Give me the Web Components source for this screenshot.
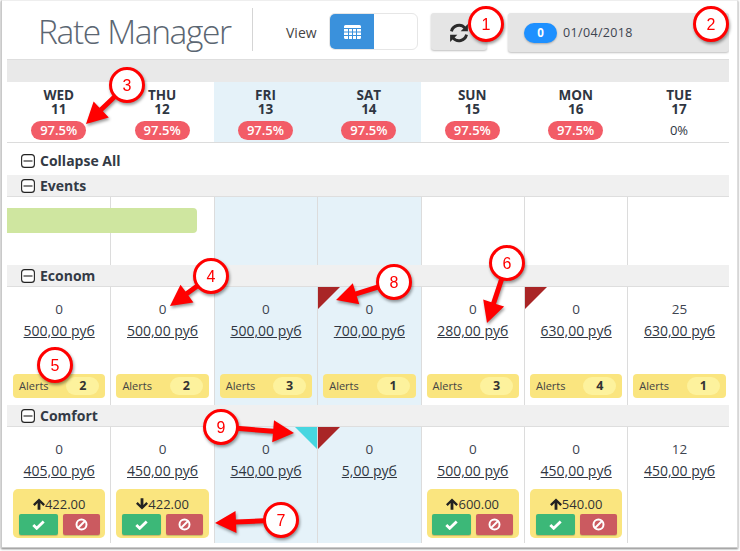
<!DOCTYPE html>
<html>
<head>
<meta charset="utf-8">
<style>
  html, body { margin: 0; padding: 0; background: #fff; }
  body { width: 740px; height: 551px; overflow: hidden; font-family: "Open Sans", sans-serif; color: #333a45; }
</style>
</head>
<body>
<rate-manager></rate-manager>

<script>
const MINUS = `<svg width="14" height="14" viewBox="0 0 14 14"><rect x=".6" y=".6" width="12.8" height="12.8" rx="3" fill="#fff" stroke="#222" stroke-width="1.1"/><path d="M2.5 7h9" stroke="#222" stroke-width="1.1"/></svg>`;

class TopBar extends HTMLElement {
  constructor() {
    super();
    this.attachShadow({ mode: "open" }).innerHTML = `
      <style>
        :host { display: flex; height: 59px; align-items: flex-start; box-sizing: border-box; }
        h1 { margin: 11px 0 0 31px; width: 214px; height: 40px; font: 300 33.5px/40px "Open Sans", sans-serif; color: #5b6672; letter-spacing: -1.35px; white-space: nowrap; }
        .sep { width: 1px; height: 43px; margin-top: 8px; background: #d5d5d5; }
        .view { margin: 25px 0 0 33px; width: 43px; font-size: 14px; line-height: 16px; color: #444; }
        .toggle { display: flex; margin-top: 13px; width: 89px; height: 37px; box-sizing: border-box; border: 1px solid #e6e6e6; border-radius: 6px; background: #fff; overflow: hidden; }
        .toggle b { display: flex; width: 44px; align-items: center; justify-content: center; background: #3a91dc; }
        .refresh { display: flex; align-items: center; justify-content: center; margin: 13px 0 0 13px; width: 56px; height: 37px; padding-top: 3px; box-sizing: border-box; background: #e5e5e5; border-radius: 3px; box-shadow: 0 1px 2px rgba(0,0,0,.25); }
        .date { display: flex; align-items: center; margin: 13px 0 0 21px; width: 221px; height: 39px; box-sizing: border-box; padding-left: 16px; background: #e5e5e5; border-radius: 3px; box-shadow: 0 1px 2px rgba(0,0,0,.25); font-size: 12.5px; letter-spacing: .35px; color: #3d4450; }
        .pill { width: 33px; height: 20px; margin-right: 6px; border-radius: 10px; background: #1e90ff; color: #fff; font-weight: 700; font-size: 11.5px; line-height: 20px; text-align: center; letter-spacing: 0; box-shadow: 0 1px 2px rgba(0,0,0,.25); }
      </style>
      <h1>Rate Manager</h1>
      <div class="sep"></div>
      <div class="view">View</div>
      <div class="toggle">
        <b><svg width="17" height="14" viewBox="0 0 17 14"><path fill="#fff" d="M1.5 0h14A1.5 1.5 0 0 1 17 1.500v11a1.500 1.500 0 0 1-1.500 1.500h-14A1.500 1.500 0 0 1 0 12.500v-11A1.500 1.500 0 0 1 1.500 0z"/><path stroke="#3a91dc" stroke-width="1" d="M0 3.500h17M0 7h17M0 10.500h17M4.500 3v11M8.500 3v11M12.500 3v11"/></svg></b>
      </div>
      <div class="refresh"><svg width="20" height="20" viewBox="0 0 18 18"><path fill="none" stroke="#2b2b2b" stroke-width="2.600" d="M2.200 7.500A7 7 0 0 1 14.400 4.600M15.800 10.500A7 7 0 0 1 3.600 13.400"/><path fill="#2b2b2b" d="M17 1v6.500h-6.500zM1 17v-6.500h6.500z"/></svg></div>
      <div class="date"><span class="pill">0</span>01/04/2018</div>
    `;
  }
}
customElements.define("top-bar", TopBar);

class DayHead extends HTMLElement {
  constructor() {
    super();
    const pct = this.getAttribute("pct");
    const cls = pct === "0%" ? "plain" : "badge";
    this.attachShadow({ mode: "open" }).innerHTML = `
      <style>
        :host { display: flex; flex-direction: column; align-items: center; box-sizing: border-box; padding-top: 7px; font-weight: 700; font-size: 13.5px; line-height: 13.500px; color: #2f3642; }
        :host([weekend]) { background: #e5f2f9; }
        .badge { margin-top: 5px; width: 55px; height: 19px; border-radius: 10px; background: #f25c67; color: #fff; font-size: 13px; font-weight: 600; line-height: 19px; text-align: center; }
        .plain { margin-top: 6px; font-size: 13px; font-weight: 400; line-height: 16px; }
      </style>
      <span>${this.getAttribute("day")}</span>
      <span>${this.getAttribute("num")}</span>
      <span class="${cls}">${pct}</span>
    `;
  }
}
customElements.define("day-head", DayHead);

class RowHead extends HTMLElement {
  constructor() {
    super();
    this.attachShadow({ mode: "open" }).innerHTML = `
      <style>
        :host { display: flex; align-items: center; gap: 5px; box-sizing: border-box; height: 22px; padding-left: 14px; background: #f0f0f0; border-bottom: 1px solid #dedede; font-weight: 700; font-size: 14px; color: #333a45; }
        :host([plain]) { height: 32px; background: #fff; border: 0; padding-top: 3px; }
        svg { display: block; }
      </style>
      ${MINUS}<slot></slot>
    `;
  }
}
customElements.define("row-head", RowHead);

class RateCell extends HTMLElement {
  constructor() {
    super();
    const g = (n) => this.getAttribute(n);
    let extra = "";
    if (g("alerts")) {
      extra = `<div class="alerts"><span>Alerts</span><b>${g("alerts")}</b></div>`;
    } else if (g("offer")) {
      const up = g("dir") === "up";
      extra = `<div class="offer">
        <div class="val"><svg width="12" height="12" viewBox="0 0 12 12"><path fill="#222" transform="${up ? "" : "rotate(180 6 6)"}" d="M6 .5L12 6.300 10.300 8 7.400 5.100V11.800H4.600V5.100L1.700 8 0 6.300z"/></svg>${g("offer")}</div>
        <div class="btns">
          <span class="ok"><svg width="13" height="10" viewBox="0 0 13 10"><path fill="none" stroke="#fff" stroke-width="2.800" d="M1.300 5l3.400 3.300L11.700 1.500"/></svg></span>
          <span class="no"><svg width="13" height="13" viewBox="0 0 13 13"><circle cx="6.500" cy="6.500" r="5" fill="none" stroke="#fff" stroke-width="2"/><path stroke="#fff" stroke-width="2" d="M3 10l7-7"/></svg></span>
        </div>
      </div>`;
    }
    this.attachShadow({ mode: "open" }).innerHTML = `
      <style>
        :host { position: relative; display: flex; flex-direction: column; align-items: center; box-sizing: border-box; padding-top: 13px; border-left: 1px solid #dcdcdc; font-size: 14px; line-height: 18px; color: #3d4450; }
        :host(:first-child) { border-left-color: transparent; }
        :host([weekend]) { background: #e5f2f9; }
        .free { height: 18px; font-size: 13.5px; }
        .price { margin-top: 4px; color: #2f3642; text-decoration: underline; white-space: nowrap; }
        .alerts { position: absolute; left: 5px; right: 5px; bottom: 7px; display: flex; align-items: center; justify-content: space-between; height: 24px; padding: 0 6px; border-radius: 4px; background: #fae57f; font-size: 11px; color: #444; }
        .alerts b { width: 33px; height: 18px; border-radius: 9px; background: #fdf29d; font-size: 12.500px; line-height: 18px; text-align: center; color: #333; }
        .offer { position: absolute; left: 5px; right: 5px; bottom: 5px; height: 49px; box-sizing: border-box; padding-top: 6px; border-radius: 5px; background: #fae57f; }
        .val { display: flex; align-items: center; justify-content: center; height: 17px; font-size: 13px; color: #333; }
        .btns { display: flex; justify-content: center; gap: 1px; margin-top: 2px; }
        .btns span { display: flex; align-items: center; justify-content: center; height: 21px; border-radius: 2px; box-shadow: 0 1px 1px rgba(0,0,0,.2); }
        .ok { width: 39px; background: #3cb878; }
        .no { width: 37px; margin-left: 4px; background: #cb5a60; }
        .mark { position: absolute; top: 0; width: 0; height: 0; }
        .red { left: 0; border-top: 22px solid #a92526; border-right: 22px solid transparent; }
        .cyan { right: 0; border-top: 22px solid #47d6e0; border-left: 22px solid transparent; }
      </style>
      ${g("mark") === "red" ? `<i class="mark red"></i>` : ""}
      ${g("mark") === "cyan" ? `<i class="mark cyan"></i>` : ""}
      <span class="free">${g("free")}</span>
      <span class="price">${g("price")}</span>
      ${extra}
    `;
  }
}
customElements.define("rate-cell", RateCell);

class EventsCell extends HTMLElement {
  constructor() {
    super();
    this.attachShadow({ mode: "open" }).innerHTML = `
      <style>
        :host { display: block; border-left: 1px solid #dcdcdc; }
        :host(:first-child) { border-left-color: transparent; }
        :host([weekend]) { background: #e5f2f9; }
      </style>
    `;
  }
}
customElements.define("events-cell", EventsCell);

class WeekRow extends HTMLElement {
  constructor() {
    super();
    this.attachShadow({ mode: "open" }).innerHTML = `
      <style>
        :host { position: relative; display: grid; grid-template-columns: repeat(7, 103.4px); height: var(--row-h, auto); }
      </style>
      <slot></slot>
    `;
  }
}
customElements.define("week-row", WeekRow);

// annotation layer, snagit style callouts over the page
class CallOut extends HTMLElement {
  constructor() {
    super();
    const g = (n) => Number(this.getAttribute(n));
    const cx = g("x"), cy = g("y");
    let arrow = "";
    if (this.hasAttribute("tx")) {
      const tx = g("tx"), ty = g("ty");
      const dx = tx - cx, dy = ty - cy;
      const len = Math.hypot(dx, dy);
      const ux = dx / len, uy = dy / len;
      const nx = -uy, ny = ux;
      const bx = tx - ux * 21, by = ty - uy * 21;
      const p = (a, b, w) => `${(a + nx * w).toFixed(1)},${(b + ny * w).toFixed(1)}`;
      arrow = `<polygon fill="#f00" points="${p(cx, cy, 2.5)} ${p(bx, by, 2.5)} ${p(bx, by, 11)} ${tx},${ty} ${p(bx, by, -11)} ${p(bx, by, -2.5)} ${p(cx, cy, -2.5)}"/>`;
    }
    this.attachShadow({ mode: "open" }).innerHTML = `
      <style>
        :host { position: absolute; left: 0; top: 0; width: 740px; height: 551px; pointer-events: none; }
        svg { position: absolute; left: 0; top: 0; overflow: visible; filter: drop-shadow(1px 2px 1.500px rgba(0,0,0,.4)); }
        text { font: 16px "Liberation Sans", sans-serif; fill: #f00; text-anchor: middle; }
      </style>
      <svg width="740" height="551">
        ${arrow}
        <circle cx="${cx}" cy="${cy}" r="16.500" fill="#fff" stroke="#f00" stroke-width="3"/>
        <text x="${cx}" y="${cy + 5.500}">${this.getAttribute("n")}</text>
      </svg>
    `;
  }
}
customElements.define("call-out", CallOut);

class RateManager extends HTMLElement {
  constructor() {
    super();
    const days = [["WED",11],["THU",12],["FRI",13,1],["SAT",14,1],["SUN",15],["MON",16],["TUE",17]];
    const we = (i) => (days[i][2] ? "weekend" : "");
    const econom = [
      ["0","500,00 руб",2],["0","500,00 руб",2],["0","500,00 руб",3],["0","700,00 руб",1,"red"],
      ["0","280,00 руб",3],["0","630,00 руб",4,"red"],["25","630,00 руб",1],
    ];
    const comfort = [
      ["0","405,00 руб","422.00","up"],["0","450,00 руб","422.00","down"],["0","540,00 руб",,,"cyan"],["0","5,00 руб",,,"red"],
      ["0","500,00 руб","600.00","up"],["0","450,00 руб","540.00","up"],["12","450,00 руб"],
    ];
    const calls = [[1,486,24],[2,711,24],[3,127,85,86,124],[4,211,276,170,306],[5,55,365],[6,507,263,487,323],[7,281,520,215,523],[8,394,282,336,300],[9,221,427,294,433]];
    this.attachShadow({ mode: "open" }).innerHTML = `
      <style>
        :host { display: block; position: relative; width: 740px; height: 551px; box-sizing: border-box; overflow: hidden; }
        .frame { position: absolute; left: 1px; top: 0; width: 737px; height: 548px; box-sizing: border-box; border: 1px solid #c9c9c9; border-top-color: #eee; border-right-color: #ddd; box-shadow: 0 1px 2px rgba(0,0,0,.5); pointer-events: none; }
        .wrap { display: flex; flex-direction: column; margin-left: 7px; width: 722px; overflow: hidden; }
        .band { flex: none; height: 23px; background: #e9e9e9; border-top: 1px solid #dedede; box-sizing: border-box; }
        .heads { flex: none; height: 60px; border-bottom: 1px solid #dcdcdc; }
        .events { flex: none; position: relative; --row-h: 68px; }
        .bar { position: absolute; left: 0; top: 11px; width: 190px; height: 25px; background: #cfe6a0; border-radius: 0 4px 4px 0; }
        .econom { flex: none; --row-h: 118px; }
        .comfort { flex: none; --row-h: 116px; }
      </style>
      <div class="frame"></div>
      <div class="wrap">
        <top-bar></top-bar>
        <div class="band"></div>
        <week-row class="heads">
          ${days.map((d) => `<day-head day="${d[0]}" num="${d[1]}" pct="${d[0] === "TUE" ? "0%" : "97.5%"}" ${d[2] ? "weekend" : ""}></day-head>`).join("")}
        </week-row>
        <row-head plain>Collapse All</row-head>
        <row-head>Events</row-head>
        <div class="events">
          <week-row>${days.map((d, i) => `<events-cell ${we(i)}></events-cell>`).join("")}</week-row>
          <div class="bar"></div>
        </div>
        <row-head>Econom</row-head>
        <week-row class="econom">
          ${econom.map((c, i) => `<rate-cell ${we(i)} free="${c[0]}" price="${c[1]}" alerts="${c[2]}" ${c[3] ? `mark="${c[3]}"` : ""}></rate-cell>`).join("")}
        </week-row>
        <row-head>Comfort</row-head>
        <week-row class="comfort">
          ${comfort.map((c, i) => `<rate-cell ${we(i)} free="${c[0]}" price="${c[1]}" ${c[2] ? `offer="${c[2]}" dir="${c[3]}"` : ""} ${c[4] ? `mark="${c[4]}"` : ""}></rate-cell>`).join("")}
        </week-row>
      </div>
      ${calls.map((c) => `<call-out n="${c[0]}" x="${c[1]}" y="${c[2]}" ${c[3] ? `tx="${c[3]}" ty="${c[4]}"` : ""}></call-out>`).join("")}
    `;
  }
}
customElements.define("rate-manager", RateManager);
</script>
</body>
</html>
